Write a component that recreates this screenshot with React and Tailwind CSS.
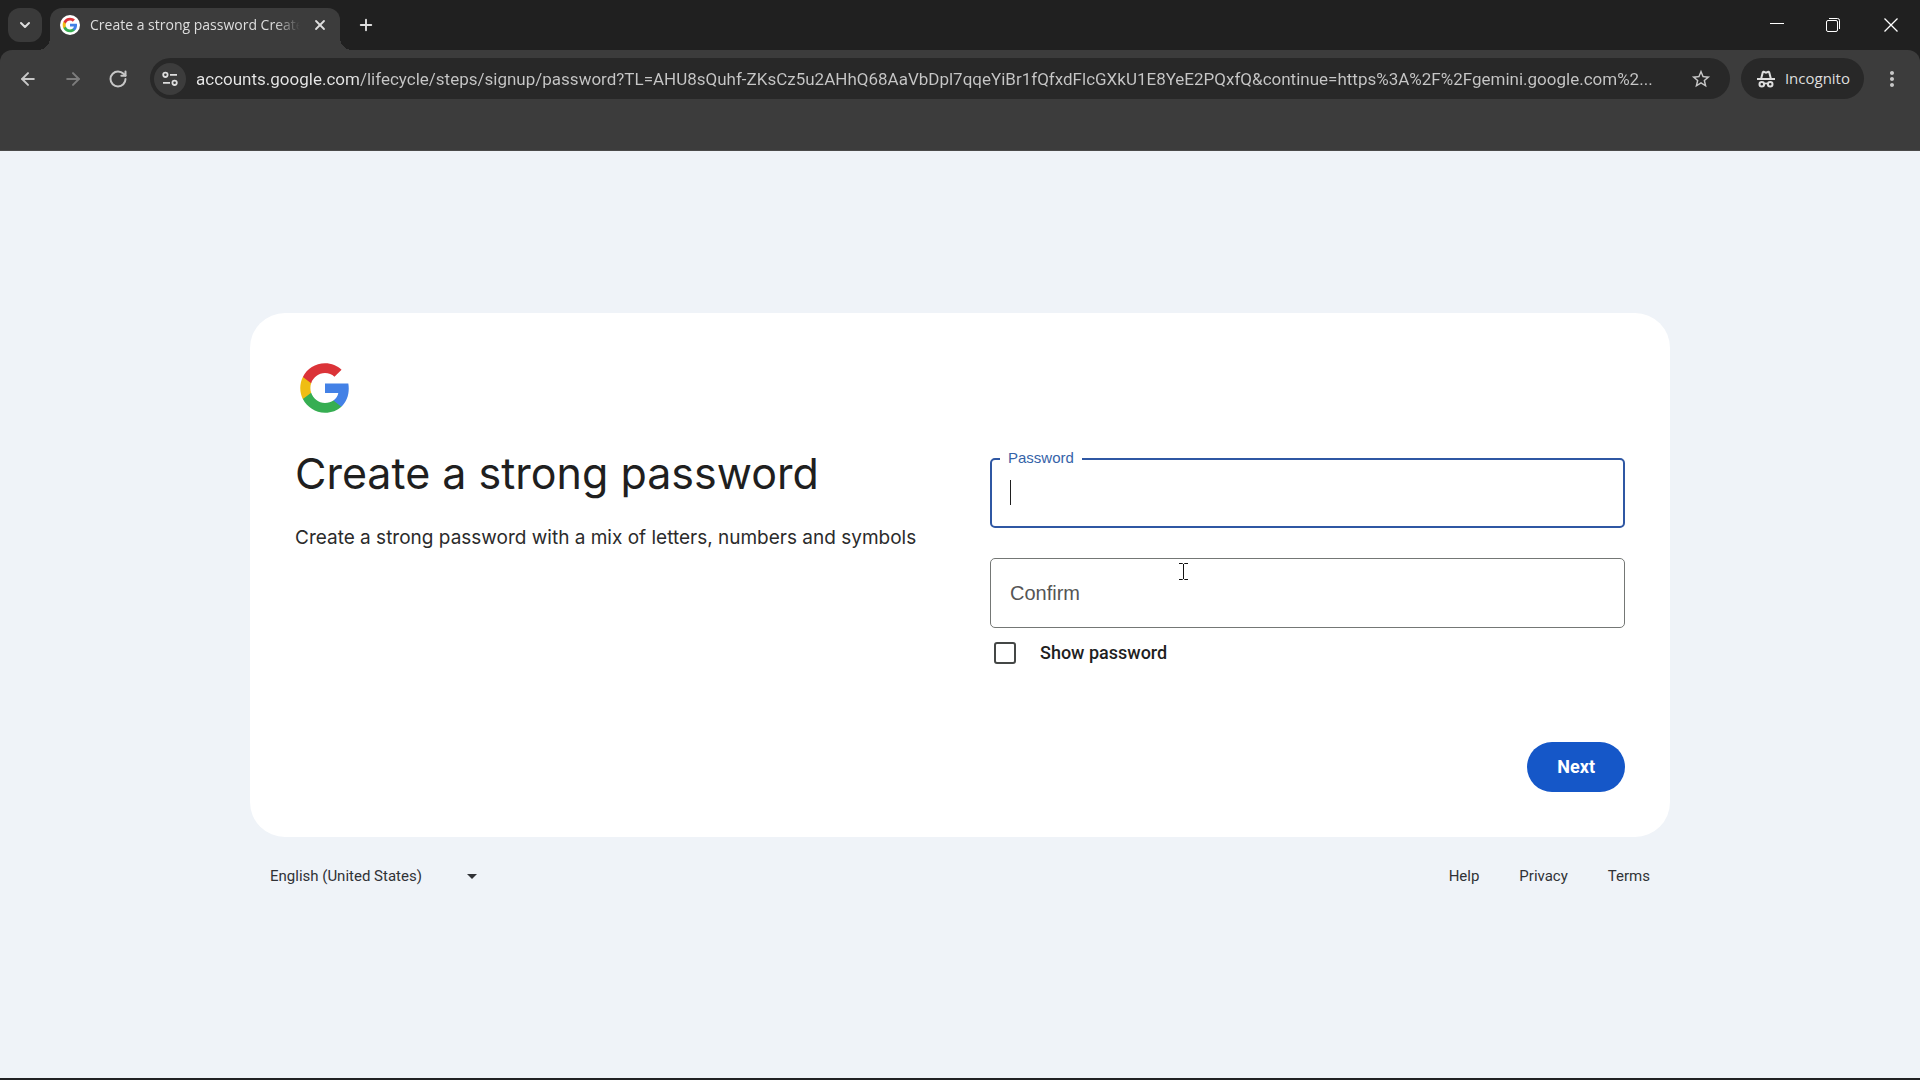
import { useState } from 'react';
import { ArrowLeft, ArrowRight, ChevronDown, Plus, RotateCw, X } from 'lucide-react';
import { MdMoreVert, MdStarBorder } from 'react-icons/md';

const PAGE_URL =
  'accounts.google.com/lifecycle/steps/signup/password?TL=AHU8sQuhf-ZKsCz5u2AHhQ68AaVbDpl7qqeYiBr1fQfxdFlcGXkU1E8YeE2PQxfQ&continue=https%3A%2F%2Fgemini.google.com%2...';

const footerLinks = ['Help', 'Privacy', 'Terms'];

const GoogleLogo = ({ className }) => (
  <svg viewBox="0 0 48 48" className={className} aria-hidden="true">
    <path fill="#4381E6" d="M45.12 24.5c0-1.56-.14-3.06-.4-4.5H24v8.51h11.84c-.51 2.75-2.06 5.08-4.39 6.64v5.52h7.11c4.16-3.83 6.56-9.47 6.56-16.17z" />
    <path fill="#36AE52" d="M24 46c5.94 0 10.92-1.97 14.56-5.33l-7.11-5.52c-1.97 1.32-4.49 2.1-7.45 2.1-5.73 0-10.58-3.87-12.31-9.07H4.34v5.7C7.96 41.07 15.4 46 24 46z" />
    <path fill="#EFBD13" d="M11.69 28.18C11.25 26.86 11 25.45 11 24s.25-2.86.69-4.18v-5.7H4.34C2.85 17.09 2 20.45 2 24s.85 6.91 2.34 9.88l7.35-5.7z" />
    <path fill="#DB3338" d="M24 10.75c3.23 0 6.13 1.11 8.41 3.29l6.31-6.31C34.91 4.18 29.93 2 24 2 15.4 2 7.96 6.93 4.34 14.12l7.35 5.7c1.73-5.2 6.58-9.07 12.31-9.07z" />
  </svg>
);

const IncognitoIcon = () => (
  <svg viewBox="0 0 18 18" className="size-[18px]" fill="none" stroke="currentColor" strokeWidth="2" aria-hidden="true">
    <path d="M0 9h18" />
    <path d="M4.2 8.5 5.8 2.2c.1-.4.5-.5.8-.4L9 2.6l2.4-.8c.3-.1.7 0 .8.4l1.6 6.3" />
    <circle cx="4.8" cy="14.2" r="2.3" />
    <circle cx="13.2" cy="14.2" r="2.3" />
    <path d="M7.1 13.9q1.9-1 3.8 0" strokeWidth="1.6" />
  </svg>
);

const TuneIcon = () => (
  <svg viewBox="0 0 16 16" className="size-4" fill="none" stroke="currentColor" strokeWidth="1.8" aria-hidden="true">
    <circle cx="3.4" cy="3.8" r="2.2" />
    <path d="M8 3.8h7M1 11.8h7" />
    <circle cx="12.6" cy="11.8" r="2.2" />
  </svg>
);

const TabStrip = () => (
  <div className="flex h-[50px] items-stretch bg-[#202020] pl-2">
    <button aria-label="Search tabs" className="mt-2 flex size-[34px] items-center justify-center rounded-xl bg-[#3a3a3a]">
      <ChevronDown className="size-4" strokeWidth={3} />
    </button>
    {/* active tab, flared into the toolbar at both feet */}
    <div className="relative mt-2 ml-2 flex w-[290px] items-center rounded-t-xl bg-[#3c3c3c] pr-3 pb-2 pl-[10px]">
      <span className="absolute bottom-0 -left-3 size-3 bg-[radial-gradient(circle_at_top_left,transparent_12px,#3c3c3c_12px)]" />
      <span className="absolute -right-3 bottom-0 size-3 bg-[radial-gradient(circle_at_top_right,transparent_12px,#3c3c3c_12px)]" />
      <span className="flex size-5 shrink-0 items-center justify-center rounded-full bg-white">
        <GoogleLogo className="size-4" />
      </span>
      <span className="ml-[10px] min-w-0 flex-1 overflow-hidden text-sm whitespace-nowrap [mask-image:linear-gradient(to_right,black_88%,transparent)]">
        Create a strong password Create a strong password
      </span>
      <button aria-label="Close tab" className="ml-3 flex size-4 items-center justify-center">
        <X className="size-4" strokeWidth={2.7} />
      </button>
    </div>
    <button aria-label="New tab" className="ml-4 flex w-5 items-center justify-center">
      <Plus className="size-[18px]" strokeWidth={2.5} />
    </button>

    <div className="ml-auto flex text-white">
      <button aria-label="Minimize" className="flex w-14 items-center justify-center">
        <svg viewBox="0 0 14 14" className="size-[14px]" stroke="currentColor"><path d="M0 5.5h14" /></svg>
      </button>
      <button aria-label="Restore" className="flex w-14 items-center justify-center">
        <svg viewBox="0 0 14 14" className="size-[14px]" fill="none" stroke="currentColor">
          <rect x=".5" y="2.5" width="11" height="11" rx="1.5" />
          <path d="M3 .5h8.5a2 2 0 0 1 2 2V11" />
        </svg>
      </button>
      <button aria-label="Close" className="flex w-[59px] items-center justify-center">
        <svg viewBox="0 0 14 14" className="size-[14px]" stroke="currentColor" strokeWidth="1.3"><path d="m.5.5 13 13M13.5.5l-13 13" /></svg>
      </button>
    </div>
  </div>
);

const Toolbar = () => (
  <div className="bg-[#202020]">
    <div className="flex h-[101px] items-start rounded-t-xl border-b border-[#4a4a4a] bg-[#3c3c3c] pt-2 pr-4 pl-[18px]">
      <div className="flex h-[41px] items-center gap-[25px] text-[#c7c7c7]">
        <button aria-label="Back"><ArrowLeft className="size-5" strokeWidth={2.4} /></button>
        <button aria-label="Forward" className="text-[#7c7c7c]"><ArrowRight className="size-5" strokeWidth={2.4} /></button>
        <button aria-label="Reload"><RotateCw className="size-5" strokeWidth={2.4} /></button>
      </div>
      <div className="ml-[22px] flex h-[41px] min-w-0 flex-1 items-center rounded-full bg-[#282828] pr-[18px] pl-1">
        <button aria-label="View site information" className="flex size-8 shrink-0 items-center justify-center rounded-full bg-[#3c3c3c]">
          <TuneIcon />
        </button>
        {/* the host is drawn brighter than the rest of the address */}
        <input
          type="text"
          aria-label="Address"
          readOnly
          value={PAGE_URL}
          className="ml-[10px] h-8 min-w-0 flex-1 bg-[linear-gradient(to_right,#e8e8e8_164px,#c7c7c7_164px)] bg-clip-text font-['Roboto',sans-serif] text-[17px] text-transparent outline-none"
        />
        <button aria-label="Bookmark this tab" className="ml-3 text-[#c7c7c7]"><MdStarBorder className="size-[22px]" /></button>
      </div>
      <button className="ml-[11px] flex h-[41px] items-center gap-[10px] rounded-full bg-[#282828] pr-[14px] pl-4 text-[15px]">
        <IncognitoIcon />
        Incognito
      </button>
      <button aria-label="Menu" className="ml-4 flex h-[41px] items-center text-[#c7c7c7]"><MdMoreVert className="size-6" /></button>
    </div>
  </div>
);

const PasswordField = ({ id, label, active, value, onChange }) => (
  <div className="relative">
    <label
      htmlFor={id}
      className={
        active
          ? 'absolute -top-2 left-[10px] bg-white px-2 text-[15px] leading-4 text-[#3563a8]'
          : 'pointer-events-none absolute top-5 left-5 text-xl leading-[30px] text-[#555]'
      }
    >
      {label}
    </label>
    <input
      id={id}
      type="password"
      value={value}
      onChange={onChange}
      className={
        active
          ? 'block h-[70px] w-full rounded-[5px] border-2 border-[#2f57a3] px-[18px] text-xl outline-none'
          : 'block h-[70px] w-full rounded-[5px] border border-[#747775] px-[19px] text-xl outline-none'
      }
    />
    {active && !value && <span className="absolute top-[22px] left-5 h-[25px] w-px bg-[#1f1f1f]" />}
  </div>
);

const SignupCard = () => {
  const [password, setPassword] = useState('');
  const [confirm, setConfirm] = useState('');

  return (
    <section className="rounded-[35px] bg-white p-[45px]">
      <GoogleLogo className="size-[60px] p-[3px]" />
      <div className="grid grid-cols-2 gap-[60px]">
        <div className="pt-7">
          <h1 className="font-['Inter',sans-serif] text-[43px] leading-[55px] whitespace-nowrap text-[#1f1f1f]">Create a strong password</h1>
          <p className="mt-[22px] font-['Inter',sans-serif] text-[19px] leading-[30px] whitespace-nowrap text-[#2b2b2b]">
            Create a strong password with a mix of letters, numbers and symbols
          </p>
        </div>
        <form className="pt-10 font-['Liberation_Sans',sans-serif]" onSubmit={(e) => e.preventDefault()}>
          <div className="flex flex-col gap-[30px]">
            <PasswordField id="password" label="Password" active value={password} onChange={(e) => setPassword(e.target.value)} />
            <PasswordField id="confirm" label="Confirm" value={confirm} onChange={(e) => setConfirm(e.target.value)} />
          </div>
          <div className="flex h-[50px] items-center gap-6 pl-1">
            <input id="show" type="checkbox" className="size-[22px] appearance-none rounded-[3px] border-2 border-[#444746] checked:bg-[#1557c8]" />
            <label htmlFor="show" className="font-['Roboto',sans-serif] text-lg font-medium text-[#1f1f1f]">Show password</label>
          </div>
          <div className="mt-16 flex justify-end">
            <button type="submit" className="h-[50px] rounded-full bg-[#1557c8] px-[30px] font-['Roboto',sans-serif] text-lg font-bold text-white">
              Next
            </button>
          </div>
        </form>
      </div>
    </section>
  );
};

const Footer = () => (
  <footer className="flex h-20 items-center justify-between px-5 font-['Roboto',sans-serif] text-[15px] text-[#303236]">
    <div className="relative flex items-center">
      <select aria-label="Language" defaultValue="en-US" className="w-[207px] appearance-none bg-transparent outline-none">
        <option value="en-US">English (United States)</option>
      </select>
      <svg viewBox="0 0 10 5" className="pointer-events-none absolute right-0 h-[5px] w-[10px]" fill="currentColor"><path d="M0 0h10L5 5z" /></svg>
    </div>
    <nav className="flex gap-10">
      {footerLinks.map((link) => (
        <a key={link} href="#">{link}</a>
      ))}
    </nav>
  </footer>
);

const App = () => {
  return (
    <div className="flex min-h-screen flex-col border-b-2 border-[#202124] bg-[#eff3f8]">
      <header className="font-['Open_Sans',sans-serif] text-[#dedede]">
        <TabStrip />
        <Toolbar />
      </header>
      <main className="flex flex-1 flex-col justify-center">
        <div className="mx-auto w-full max-w-[1420px]">
          <SignupCard />
          <Footer />
        </div>
      </main>
      {/* mouse pointer over the Confirm field */}
      <svg viewBox="0 0 11 17" className="pointer-events-none absolute top-[563px] left-[1178px] h-[17px] w-[11px]" fill="none" stroke="#111">
        <path d="M1 .5h3.5l1 1 1-1H10M5.5 1v15M1 16.5h3.5l1-1 1 1H10" />
      </svg>
    </div>
  );
};

export default App;
